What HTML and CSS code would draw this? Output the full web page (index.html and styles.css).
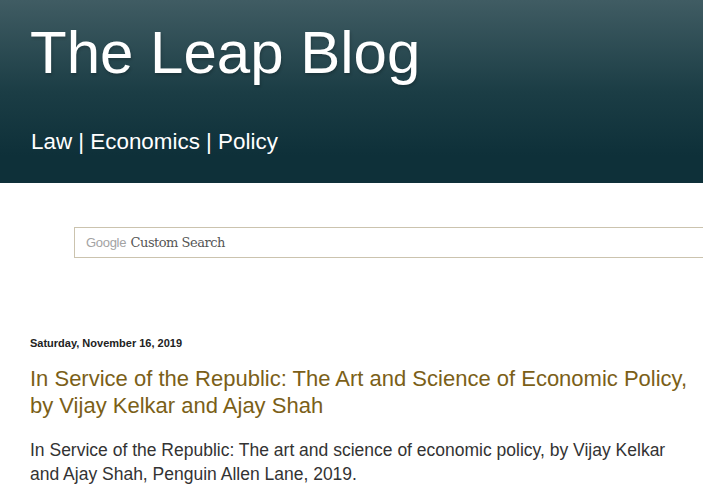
FILE: index.html
```html
<!DOCTYPE html>
<html lang="en">
  <head>
    <meta charset="UTF-8" />
    <meta name="viewport" content="width=device-width, initial-scale=1.0" />
    <title>The Leap Blog</title>
    <link rel="stylesheet" href="styles.css">
  </head>
  <body>
    <div class="header">
      <h1 class="blog-title">The Leap Blog</h1>
      <p class="blog-description">Law | Economics | Policy</p>
    </div>

    <div class="search">
      <div class="search-box">
        <span class="google">Google</span> <span class="custom">Custom Search</span>
      </div>
    </div>

    <div class="main">
      <h2 class="date-header">Saturday, November 16, 2019</h2>
      <h3 class="post-title">
        In Service of the Republic: The Art and Science of Economic Policy,
        by Vijay Kelkar and Ajay Shah
      </h3>
      <div class="post-body">
        In Service of the Republic: The art and science of economic policy, by
        Vijay Kelkar and Ajay Shah, Penguin Allen Lane, 2019.
      </div>
    </div>
  </body>
</html>
```

FILE: styles.css
```css
/* General Styles */
body {
  font-family: Arial, "Liberation Sans", sans-serif;
  background-color: #fff;
  color: #222;
  margin: 0;
  padding: 0;
  overflow: hidden;
}

/* Header */
.header {
  height: 183px;
  box-sizing: border-box;
  padding: 17px 30px 0;
  background: linear-gradient(to bottom, #405c63 0%, #1b3d45 50%, #0e3039 85%, #0e3039 100%);
  color: #fff;
}

.blog-title {
  margin: 0;
  font-size: 60px;
  font-weight: normal;
  line-height: 72px;
  text-shadow: 1px 2px 3px rgba(0, 0, 0, 0.2);
}

.blog-description {
  margin: 40px 0 0 1px;
  font-size: 22.4px;
  line-height: 26px;
}

/* Search */
.search {
  padding: 44px 0 0 74px;
  overflow: hidden;
}

.search-box {
  margin-right: -20px;
  height: 29px;
  border: 1px solid #cbc3ae;
  padding-left: 11px;
  line-height: 28px;
  white-space: nowrap;
}

.google {
  font-family: Arial, "Liberation Sans", sans-serif;
  font-size: 13px;
  color: #a3a3a3;
  letter-spacing: -0.3px;
}

.custom {
  font-family: "DejaVu Serif", Georgia, serif;
  font-size: 13px;
  color: #555;
  letter-spacing: -0.5px;
}

/* Post */
.main {
  width: 660px;
  padding: 78px 0 0 30px;
}

.date-header {
  margin: 0;
  font-size: 11px;
  font-weight: bold;
  line-height: 14px;
  color: #222;
}

.post-title {
  margin: 15px 0 0;
  font-size: 22px;
  font-weight: normal;
  line-height: 27px;
  color: #7b5f18;
}

.post-body {
  margin-top: 19px;
  font-size: 17.5px;
  line-height: 24px;
  color: #333;
}
```
